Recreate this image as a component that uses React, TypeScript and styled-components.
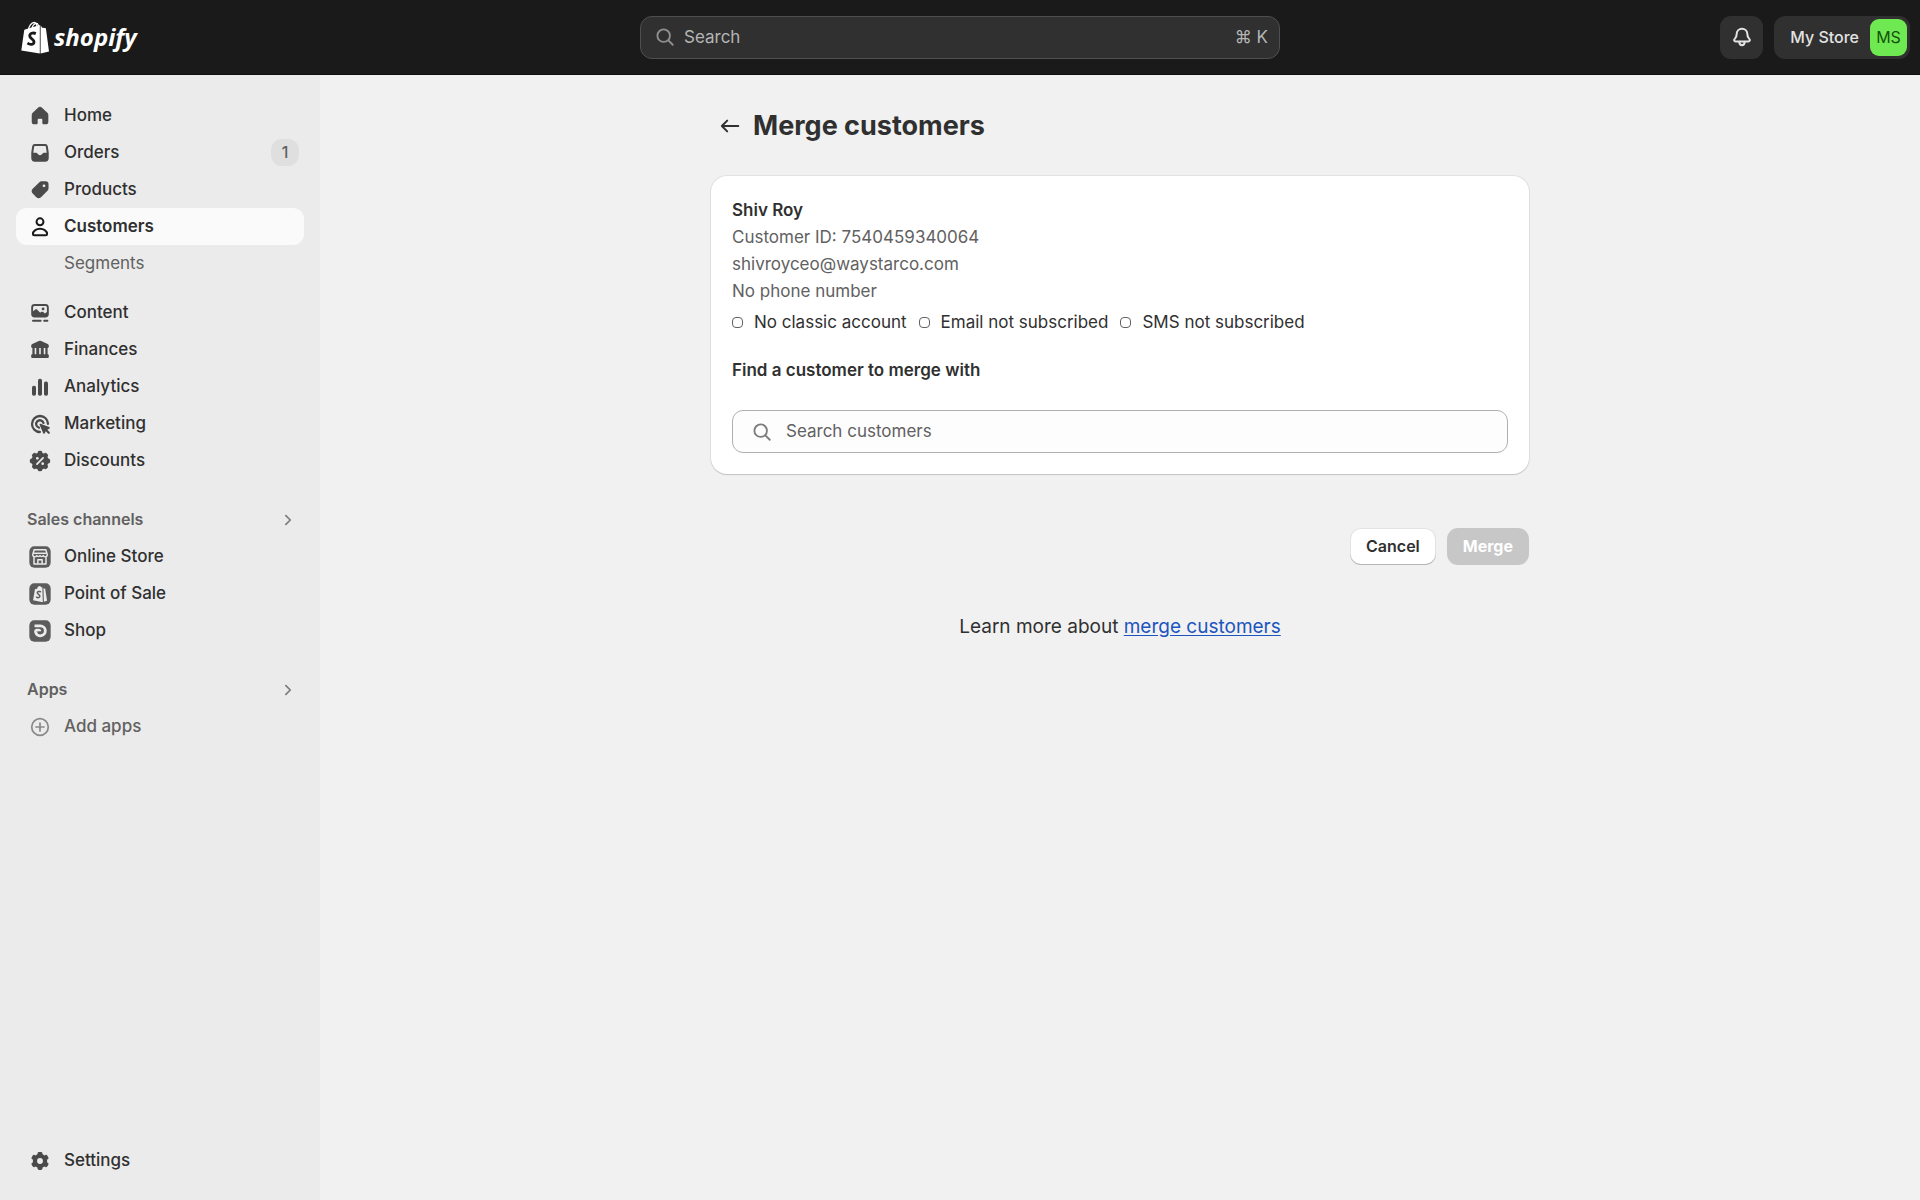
import React from "react";
import styled, { createGlobalStyle } from "styled-components";

const GlobalStyle = createGlobalStyle`
  *, *::before, *::after { box-sizing: border-box; }
  body {
    margin: 0;
    background: #f1f1f1;
    color: #303030;
    font-family: Inter, "Liberation Sans", sans-serif;
    font-size: 17px;
    line-height: 27px;
  }
  button, input { font: inherit; color: inherit; }
  button { cursor: pointer; }
  h1, h2, p, ul { margin: 0; padding: 0; }
  ul { list-style: none; }
`;

/* ---------- Layout ---------- */

const Shell = styled.div`
  min-height: 100vh;
  display: grid;
  grid-template-columns: 320px minmax(0, 1fr);
  grid-template-rows: 75px 1fr;
`;

const TopBar = styled.header`
  grid-column: 1 / -1;
  display: grid;
  grid-template-columns: 1fr minmax(0, 640px) 1fr;
  align-items: center;
  padding: 0 10px;
  background: #1a1a1a;
  border-bottom: 1px solid #101010;
`;

const Brand = styled.a`
  justify-self: start;
  display: flex;
  align-items: center;
  gap: 5px;
  padding-left: 11px;
  color: #fff;
  text-decoration: none;
`;

const Wordmark = styled.span`
  font-family: "Open Sans", "Noto Sans", sans-serif;
  font-size: 24px;
  font-weight: 700;
  font-style: italic;
  line-height: 32px;
`;

const GlobalSearch = styled.label`
  display: flex;
  align-items: center;
  gap: 5px;
  height: 43px;
  padding: 0 11px 0 10px;
  border: 1px solid #4f4f4f;
  border-radius: 12px;
  background: #303030;
  color: #b5b5b5;
  svg { color: #8f8f8f; }
`;

const SearchField = styled.input`
  flex: 1;
  min-width: 0;
  padding: 0;
  border: 0;
  outline: 0;
  background: transparent;
  &::placeholder { color: inherit; opacity: 1; }
`;

const Shortcut = styled.kbd`
  font-family: inherit;
  font-size: 17px;
`;

const Account = styled.div`
  justify-self: end;
  display: flex;
  gap: 11px;
`;

const TopButton = styled.button`
  display: flex;
  align-items: center;
  justify-content: center;
  gap: 11px;
  min-width: 43px;
  height: 43px;
  padding: 0;
  border: 0;
  border-radius: 11px;
  background: #303030;
  color: #e3e3e3;
  font-size: 16px;
  font-weight: 500;
`;

const StoreButton = styled(TopButton)`
  padding: 0 3px 0 16px;
`;

const Avatar = styled.span`
  display: grid;
  place-items: center;
  width: 37px;
  height: 37px;
  border-radius: 9px;
  background: #6fe951;
  color: #14520c;
  font-weight: 400;
`;

const Sidebar = styled.nav`
  display: flex;
  flex-direction: column;
  padding: 22px 16px 21px;
  background: #ebebeb;
`;

const NavGroup = styled.ul<{ $gap?: number }>`
  margin-top: ${(p) => p.$gap ?? 0}px;
`;

const NavFooter = styled(NavGroup)`
  margin-top: auto;
`;

const NavLink = styled.a<{ $active?: boolean; $muted?: boolean }>`
  display: flex;
  align-items: center;
  gap: 10px;
  height: 37px;
  padding: 0 5px 0 10px;
  border-radius: 11px;
  background: ${(p) => (p.$active ? "#fafafa" : "transparent")};
  color: ${(p) => (p.$muted ? "#616161" : "#303030")};
  font-weight: ${(p) => (p.$active ? 600 : 500)};
  text-decoration: none;
  svg { color: ${(p) => (p.$active ? "#1a1a1a" : p.$muted ? "#8a8a8a" : "#4a4a4a")}; }
`;

const SubLink = styled(NavLink)`
  padding-left: 48px;
  font-weight: 400;
`;

const Count = styled.span`
  margin-left: auto;
  min-width: 28px;
  border-radius: 11px;
  background: #dfdfdf;
  color: #616161;
  font-size: 16px;
  text-align: center;
`;

const SectionButton = styled.button`
  display: flex;
  align-items: center;
  justify-content: space-between;
  width: 100%;
  height: 37px;
  padding: 0 2px 0 11px;
  border: 0;
  background: transparent;
  color: #616161;
  font-size: 16px;
  font-weight: 600;
  svg { color: #7d7d7d; }
`;

const Main = styled.main`
  padding: 32px 20px;
`;

const Page = styled.div`
  max-width: 818px;
  margin: 0 auto;
`;

const PageHeader = styled.div`
  display: flex;
  align-items: center;
  gap: 5px;
  margin-bottom: 32px;
`;

const BackButton = styled.button`
  display: grid;
  place-items: center;
  width: 37px;
  height: 37px;
  padding: 0;
  border: 0;
  border-radius: 11px;
  background: transparent;
`;

const Title = styled.h1`
  font-size: 27px;
  line-height: 32px;
  font-weight: 700;
`;

const Card = styled.section`
  padding: 21px;
  border-radius: 16px;
  background: #fff;
  box-shadow: 0 1px 1px #c4c4c4, 0 0 0 1px #e2e2e2;
`;

const Heading = styled.h2`
  font-size: 17px;
  line-height: 27px;
  font-weight: 600;
`;

const Detail = styled.p`
  color: #616161;
`;

const StatusList = styled.ul`
  display: flex;
  flex-wrap: wrap;
  gap: 0 12px;
  margin: 4px 0 21px;
`;

const Status = styled.li`
  display: flex;
  align-items: center;
  gap: 11px;
  &::before {
    content: "";
    width: 11px;
    height: 11px;
    border: 1px solid #616161;
    border-radius: 4px;
  }
`;

const CustomerSearch = styled.label`
  display: flex;
  align-items: center;
  gap: 10px;
  height: 43px;
  margin-top: 26px;
  padding: 0 15px;
  border: 1px solid #b0b0b0;
  border-radius: 11px;
  background: #fdfdfd;
  color: #616161;
  svg { color: #7d7d7d; }
`;

const Actions = styled.div`
  display: flex;
  justify-content: flex-end;
  gap: 11px;
  margin-top: 54px;
`;

const Button = styled.button`
  height: 37px;
  padding: 0 16px;
  border: 0;
  border-radius: 11px;
  background: #fff;
  font-size: 16px;
  font-weight: 600;
  box-shadow: inset 0 -1px 0 #b5b5b5, inset 0 0 0 1px #e3e3e3;
  &:disabled {
    background: #c7c7c7;
    color: #fff;
    font-weight: 700;
    box-shadow: none;
    cursor: default;
  }
`;

const FooterHelp = styled.p`
  margin-top: 48px;
  font-size: 19px;
  text-align: center;
  a { color: #1c55bd; text-underline-offset: 2px; }
`;

/* ---------- Icons ---------- */

const IconSvg = styled.svg`
  flex: none;
  display: block;
  width: 28px;
  height: 28px;
  fill: currentColor;
`;

const Stroke = styled.g<{ $width?: number }>`
  fill: none;
  stroke: currentColor;
  stroke-width: ${(p) => p.$width ?? 1.5};
  stroke-linecap: round;
  stroke-linejoin: round;
`;

const Icon = ({ children }: { children: React.ReactNode }) => (
  <IconSvg viewBox="-0.5 -0.5 21 21" aria-hidden="true">{children}</IconSvg>
);

const HomeIcon = () => (
  <Icon>
    <path d="M8.5 3.85a2.2 2.2 0 0 1 3 0l4 3.7c.5.45.75 1.05.75 1.7v5a2 2 0 0 1-2 2h-1.75a.75.75 0 0 1-.75-.75v-2.75a.75.75 0 0 0-.75-.75h-2a.75.75 0 0 0-.75.75v2.75a.75.75 0 0 1-.75.75H5.8a2 2 0 0 1-2-2v-5c0-.65.25-1.25.75-1.7z" />
  </Icon>
);

const OrdersIcon = () => (
  <Icon>
    <path fillRule="evenodd" d="M6.1 3.3h7.8a2 2 0 0 1 1.95 1.6l.6 4.1.1.9v3.85a2.75 2.75 0 0 1-2.75 2.75H6.2a2.75 2.75 0 0 1-2.75-2.75V9.9l.1-.9.6-4.1A2 2 0 0 1 6.1 3.3zm.2 1.5a.7.7 0 0 0-.7.6L4.95 9.9H7c.55 0 .95.3 1.2.75.4.65 1.05 1.1 1.8 1.1s1.4-.45 1.8-1.1c.25-.45.65-.75 1.2-.75h2.05l-.65-4.5a.7.7 0 0 0-.7-.6z" />
  </Icon>
);

const ProductsIcon = () => (
  <Icon>
    <path fillRule="evenodd" d="M11.3 3.5a2.75 2.75 0 0 0-1.95.8L4.7 8.95a2.75 2.75 0 0 0 0 3.9l2.35 2.35a2.75 2.75 0 0 0 3.9 0l4.65-4.65a2.75 2.75 0 0 0 .8-1.95V5.75a2.25 2.25 0 0 0-2.25-2.25zM13 7.9a1.05 1.05 0 1 0 0-2.1 1.05 1.05 0 0 0 0 2.1z" />
  </Icon>
);

const CustomersIcon = () => (
  <Icon>
    <Stroke>
      <circle cx="10" cy="6.1" r="2.6" />
      <path d="M4.7 15.3c0-2.2 2.3-3.9 5.3-3.9s5.3 1.7 5.3 3.9c0 .5-.4.9-.9.9H5.6c-.5 0-.9-.4-.9-.9z" />
    </Stroke>
  </Icon>
);

const ContentIcon = () => (
  <Icon>
    <path fillRule="evenodd" d="M6 3.3h8a2.6 2.6 0 0 1 2.6 2.6v4.8a2.6 2.6 0 0 1-2.6 2.6H6a2.6 2.6 0 0 1-2.6-2.6V5.9A2.6 2.6 0 0 1 6 3.3zm0 1.4c-.7 0-1.2.5-1.2 1.2v2.8l1.5-1.2c.5-.4 1.2-.35 1.65.1l2.2 2.2.6-.5c.5-.4 1.2-.4 1.7 0l1.2 1 1.55-1.1V5.9c0-.7-.5-1.2-1.2-1.2zm6.3 3.3a1.05 1.05 0 1 0 0-2.1 1.05 1.05 0 0 0 0 2.1z" />
    <rect x="4" y="15" width="7.2" height="1.5" rx=".75" />
    <rect x="12.4" y="15" width="3.9" height="1.5" rx=".75" />
  </Icon>
);

const FinancesIcon = () => (
  <Icon>
    <path fillRule="evenodd" d="M9.1 3.2a2 2 0 0 1 1.8 0l4.9 2.3c.5.25.8.7.8 1.2v.9c0 .5-.4.9-.9.9v4.6c.5 0 .9.4.9.9v1.3c0 .4-.3.7-.7.7H4.1a.7.7 0 0 1-.7-.7v-1.3c0-.5.4-.9.9-.9V8.5a.9.9 0 0 1-.9-.9v-.9c0-.5.3-.95.8-1.2zM6 8.5v4.6h1.2V8.500zm3.400 0v4.600h1.200V8.500zm3.400 0v4.600H14V8.500z" />
  </Icon>
);

const AnalyticsIcon = () => (
  <Icon>
    <rect x="4" y="9" width="3" height="7.6" rx="1.3" />
    <rect x="8.5" y="3.8" width="3" height="12.8" rx="1.3" />
    <rect x="13" y="5.8" width="3" height="10.8" rx="1.3" />
  </Icon>
);

const MarketingIcon = () => (
  <Icon>
    <Stroke $width={1.7}>
      <path d="M16 9.9a6 6 0 1 0-6.1 6.1" />
      <path d="M12.6 9.2A2.8 2.8 0 1 0 9.2 12.7" />
    </Stroke>
    <path d="M10.3 9.900 16.900 12.300c.6.200.6 1 0 1.300l-1.400.700 1.700 1.700a.85.85 0 0 1-1.200 1.200l-1.700-1.700-.7 1.400c-.3.600-1.100.500-1.300-.1L9.700 10.600a.5.5 0 0 1 .6-.7z" />
  </Icon>
);

const PETALS = [0, 45, 90, 135, 180, 225, 270, 315];

const DiscountsIcon = () => (
  <Icon>
    <circle cx="10" cy="10" r="6.4" />
    {PETALS.map((a) => (
      <rect key={a} x="8.2" y="2.4" width="3.6" height="4" rx="1.4" transform={`rotate(${a} 10 10)`} />
    ))}
    <g fill="#ebebeb">
      <circle cx="8" cy="8" r="1" />
      <circle cx="12" cy="12" r="1" />
      <path d="m7.700 12.300 4.600-4.600" stroke="#ebebeb" strokeWidth="1.300" strokeLinecap="round" />
    </g>
  </Icon>
);

const TEETH = [0, 60, 120, 180, 240, 300];

const SettingsIcon = () => (
  <Icon>
    <circle cx="10" cy="10" r="3.800" fill="none" stroke="currentColor" strokeWidth="3.200" />
    {TEETH.map((a) => (
      <rect key={a} x="8.200" y="3.200" width="3.600" height="3.800" rx="1.100" transform={`rotate(${a} 10 10)`} />
    ))}
  </Icon>
);

const AddIcon = () => (
  <Icon>
    <Stroke $width={1.3}>
      <circle cx="10" cy="10" r="6.2" />
      <path d="M10 7v6M7 10h6" />
    </Stroke>
  </Icon>
);

const ChannelTile = ({ children }: { children: React.ReactNode }) => (
  <Icon>
    <rect x="2" y="2" width="16" height="16" rx="3.8" fill="#5c5c5c" />
    {children}
  </Icon>
);

const OnlineStoreIcon = () => (
  <ChannelTile>
    <g fill="none" stroke="#ebebeb" strokeWidth="1.1" strokeLinejoin="round">
      <path d="M5.6 4.6h8.8l1 3.4v.6a1.5 1.5 0 0 1-2.9.3 1.4 1.4 0 0 1-2.5 0 1.4 1.4 0 0 1-2.5 0 1.5 1.5 0 0 1-2.9-.3V8z" />
      <path d="M4.9 7.2h10.2" />
      <path d="M5.5 10.2v5h9v-5" />
      <path d="M8.4 15v-3h3.2v3" />
    </g>
  </ChannelTile>
);

const PointOfSaleIcon = () => (
  <ChannelTile>
    <path fill="#ebebeb" d="m6.2 6.5 1.6-.5c.4-1.2 1.2-2 2.1-1.9.5 0 .9.4 1.1.9l.8.2.3 10.9-7.3-1.4zM12.6 5.6l1.3.5 1.4 8.9-2.4.9z" />
    <path fill="none" stroke="#5c5c5c" strokeWidth="1.1" strokeLinecap="round" d="M10.4 8.3c-1-.5-2.4-.2-2.4.8 0 1.2 2 1.2 1.9 2.6-.1 1.1-1.5 1.3-2.5.7" />
  </ChannelTile>
);

const ShopIcon = () => (
  <ChannelTile>
    <path fill="none" stroke="#ebebeb" strokeWidth="2.1" d="M5.900 6.200h4.400a3.700 3.700 0 1 1-3.600 4.600c-.2-.9.200-1.500 1.200-1.500h1c.6 0 1 .300 1 .9" />
  </ChannelTile>
);

const SearchIcon = () => (
  <Icon>
    <Stroke $width={1.4}>
      <circle cx="9" cy="9" r="4.7" />
      <path d="m12.500 12.500 3.300 3.300" />
    </Stroke>
  </Icon>
);

const BellIcon = () => (
  <Icon>
    <Stroke>
      <path d="M10 3.8a4 4 0 0 0-4 3.9c0 1.9-.5 2.7-1.3 3.5-.5.5-.8.9-.6 1.4.2.5.6.7 1.2.7h9.4c.6 0 1-.2 1.2-.7.2-.5-.1-.9-.6-1.4-.8-.8-1.3-1.6-1.3-3.5a4 4 0 0 0-4-3.9z" />
      <path d="M8 13.6c0 1.6.8 2.6 2 2.6s2-1 2-2.6" />
    </Stroke>
  </Icon>
);

const BackIcon = () => (
  <Icon>
    <Stroke>
      <path d="M16.2 10H4M7.9 6 3.9 10l4 4" />
    </Stroke>
  </Icon>
);

const ChevronIcon = () => (
  <Icon>
    <Stroke $width={1.3}>
      <path d="m8.4 6.7 3.3 3.3-3.3 3.3" />
    </Stroke>
  </Icon>
);

const BagSvg = styled.svg`
  width: 28px;
  height: 33px;
`;

const ShopifyBag = () => (
  <BagSvg viewBox="0 0 28 33" aria-hidden="true">
    <g fill="none" stroke="#fff" strokeWidth="1.3">
      <path d="M7.2 9.5c.6-4.6 3.2-8 6-8 1.9 0 2.9 2.4 2.9 6" />
      <path d="M10.8 8.5c.5-3.5 2.5-6 4.7-6.2 1.4 0 2 1.7 2.2 4.2" />
    </g>
    <path fill="#fff" d="M3.2 9.3c.1-.5.4-.7.8-.8L18.8 4v28.5L.3 29.5z" />
    <path fill="#fff" d="m19.6 4.3 1.6 2.5 3 .2c.4 0 .6.3.7.6L28 30.4l-8.4 2.1z" />
    <path fill="none" stroke="#1a1a1a" strokeWidth="2.8" d="M14.8 12.6c-2.7-1.2-6-.5-6.1 2.2-.1 2.9 4.4 3.2 4.3 6.2-.1 2.6-3.6 3.2-6.6 1.2" />
  </BagSvg>
);

/* ---------- Data ---------- */

const PRIMARY = [
  { label: "Home", icon: <HomeIcon /> },
  { label: "Orders", icon: <OrdersIcon />, count: 1 },
  { label: "Products", icon: <ProductsIcon /> },
  { label: "Customers", icon: <CustomersIcon />, active: true },
];

const SECONDARY = [
  { label: "Content", icon: <ContentIcon /> },
  { label: "Finances", icon: <FinancesIcon /> },
  { label: "Analytics", icon: <AnalyticsIcon /> },
  { label: "Marketing", icon: <MarketingIcon /> },
  { label: "Discounts", icon: <DiscountsIcon /> },
];

const CHANNELS = [
  { label: "Online Store", icon: <OnlineStoreIcon /> },
  { label: "Point of Sale", icon: <PointOfSaleIcon /> },
  { label: "Shop", icon: <ShopIcon /> },
];

const STATUSES = ["No classic account", "Email not subscribed", "SMS not subscribed"];

type Item = { label: string; icon: React.ReactNode; count?: number; active?: boolean; muted?: boolean };

const NavItem = ({ label, icon, count, active, muted }: Item) => (
  <li>
    <NavLink href="#" $active={active} $muted={muted} aria-current={active ? "page" : undefined}>
      {icon}
      {label}
      {count !== undefined && <Count>{count}</Count>}
    </NavLink>
  </li>
);

export default function App() {
  return (
    <>
      <GlobalStyle />
      <Shell>
        <TopBar>
          <Brand href="#">
            <ShopifyBag />
            <Wordmark>shopify</Wordmark>
          </Brand>
          <GlobalSearch>
            <SearchIcon />
            <SearchField type="text" placeholder="Search" aria-label="Search" />
            <Shortcut>⌘ K</Shortcut>
          </GlobalSearch>
          <Account>
            <TopButton type="button" aria-label="Notifications">
              <BellIcon />
            </TopButton>
            <StoreButton type="button">
              My Store
              <Avatar>MS</Avatar>
            </StoreButton>
          </Account>
        </TopBar>

        <Sidebar aria-label="Main">
          <NavGroup>
            {PRIMARY.map((item) => <NavItem key={item.label} {...item} />)}
            <li><SubLink href="#" $muted>Segments</SubLink></li>
          </NavGroup>
          <NavGroup $gap={12}>
            {SECONDARY.map((item) => <NavItem key={item.label} {...item} />)}
          </NavGroup>
          <NavGroup $gap={22}>
            <li><SectionButton type="button">Sales channels<ChevronIcon /></SectionButton></li>
            {CHANNELS.map((item) => <NavItem key={item.label} {...item} />)}
          </NavGroup>
          <NavGroup $gap={22}>
            <li><SectionButton type="button">Apps<ChevronIcon /></SectionButton></li>
            <NavItem label="Add apps" icon={<AddIcon />} muted />
          </NavGroup>
          <NavFooter>
            <NavItem label="Settings" icon={<SettingsIcon />} />
          </NavFooter>
        </Sidebar>

        <Main>
          <Page>
            <PageHeader>
              <BackButton type="button" aria-label="Back to customer"><BackIcon /></BackButton>
              <Title>Merge customers</Title>
            </PageHeader>
            <Card>
              <Heading>Shiv Roy</Heading>
              <Detail>Customer ID: 7540459340064</Detail>
              <Detail>shivroyceo@waystarco.com</Detail>
              <Detail>No phone number</Detail>
              <StatusList>
                {STATUSES.map((s) => <Status key={s}>{s}</Status>)}
              </StatusList>
              <Heading>Find a customer to merge with</Heading>
              <CustomerSearch>
                <SearchIcon />
                <SearchField type="text" placeholder="Search customers" aria-label="Search customers" />
              </CustomerSearch>
            </Card>
            <Actions>
              <Button type="button">Cancel</Button>
              <Button type="button" disabled>Merge</Button>
            </Actions>
            <FooterHelp>
              Learn more about <a href="#">merge customers</a>
            </FooterHelp>
          </Page>
        </Main>
      </Shell>
    </>
  );
}
